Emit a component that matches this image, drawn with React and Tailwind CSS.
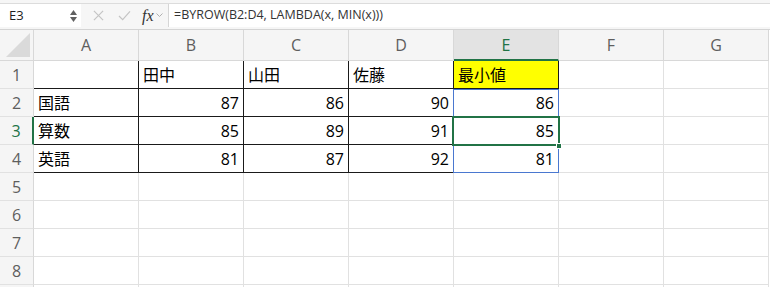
import React from "react";

const cols = ["A", "B", "C", "D", "E", "F", "G"];

const data = [
  ["", "田中", "山田", "佐藤", "最小値"],
  ["国語", 87, 86, 90, 86],
  ["算数", 85, 89, 91, 85],
  ["英語", 81, 87, 92, 81],
];

const font = { fontFamily: '"Open Sans", "Noto Sans CJK JP", sans-serif' };

function Cell({ r, c }) {
  const inTable = r >= 1 && r <= 4 && c <= 4;
  const v = inTable ? data[r - 1][c] : "";
  const num = typeof v === "number";
  const yellow = r === 1 && c === 4;
  return (
    <div
      className={`h-[28px] border-r border-b flex items-center px-[4px] text-[16px] text-black leading-none ${
        inTable ? "border-[#1a1a1a]" : "border-[#e1e1e1]"
      } ${num ? "justify-end" : "justify-start"} ${yellow ? "bg-[#ffff00]" : "bg-white"}`}
    >
      {v}
    </div>
  );
}

export default function App() {
  return (
    <div className="w-[770px] h-[287px] overflow-hidden bg-white" style={font}>
      {/* formula bar */}
      <div className="h-[30px] pt-[3px] bg-[#f6f6f6] border-b border-[#d4d4d4]">
        <div className="h-[24px] border-t border-[#dcdcdc] flex items-stretch">
          <div className="w-[81px] bg-white flex items-center justify-between pl-[9px] pr-[4px] text-[13px] text-[#1f1f1f]">
            <span>E3</span>
            <span className="flex flex-col items-center gap-[2px]">
              <svg width="7" height="5" viewBox="0 0 7 5"><path d="M3.5 0L7 5H0z" fill="#606060" /></svg>
              <svg width="7" height="5" viewBox="0 0 7 5"><path d="M0 0h7L3.5 5z" fill="#606060" /></svg>
            </span>
          </div>
          <div className="w-[87px] flex items-center pl-[12px] gap-[14px]">
            <svg width="11" height="11" viewBox="0 0 12 12"><path d="M1 1l10 10M11 1L1 11" stroke="#c4c4c4" strokeWidth="1.3" /></svg>
            <svg width="13" height="11" viewBox="0 0 14 12"><path d="M1 6.5l4 4L13 1.5" stroke="#c4c4c4" strokeWidth="1.3" fill="none" /></svg>
            <span className="flex items-center gap-[2px] -ml-[3px]">
              <span className="italic text-[16px] text-[#333]" style={{ fontFamily: '"Liberation Serif", serif' }}>fx</span>
              <svg width="7" height="5" viewBox="0 0 7 5"><path d="M0.5 0.5l3 3 3-3" stroke="#b0b0b0" fill="none" /></svg>
            </span>
          </div>
          <div className="flex-1 bg-white border-l border-[#d6d6d6] flex items-center pl-[5px] text-[12.5px] text-[#333]">
            =BYROW(B2:D4, LAMBDA(x, MIN(x)))
          </div>
        </div>
      </div>

      {/* sheet */}
      <div className="relative grid grid-cols-[34px_repeat(7,105px)]">
        {/* header row */}
        <div className="h-[31px] bg-[#f5f5f5] border-r border-b border-[#d8d8d8] relative">
          <svg className="absolute right-[3px] bottom-[3px]" width="24" height="24" viewBox="0 0 24 24">
            <path d="M24 0V24H0z" fill="#dadada" />
          </svg>
        </div>
        {cols.map((c) => (
          <div
            key={c}
            className={`h-[31px] flex items-center justify-center text-[16px] border-r ${
              c === "E"
                ? "bg-[#e3e3e3] text-[#217346] border-b-2 border-b-[#217346] border-r-[#d8d8d8]"
                : "bg-[#f5f5f5] text-[#5e5e5e] border-b border-[#d8d8d8]"
            }`}
          >
            {c}
          </div>
        ))}

        {[1, 2, 3, 4, 5, 6, 7, 8, 9].map((r) => (
          <React.Fragment key={r}>
            <div
              className={`h-[28px] bg-[#f5f5f5] flex items-center justify-center text-[16px] border-b border-[#e1e1e1] ${
                r === 3 ? "text-[#217346] border-r-2 border-r-[#217346]" : "text-[#5e5e5e] border-r border-r-[#d8d8d8]"
              }`}
            >
              {r < 9 ? r : ""}
            </div>
            {cols.map((c, i) => (
              <Cell key={c} r={r} c={i} />
            ))}
          </React.Fragment>
        ))}

        {/* selected range E2:E4 */}
        <div className="absolute left-[453px] top-[59px] w-[106px] h-[84px] border border-[#4a78d0] pointer-events-none" />
        {/* active cell E3 */}
        <div className="absolute left-[452px] top-[86px] w-[108px] h-[30px] border-2 border-[#217346] pointer-events-none" />
        <div className="absolute left-[556px] top-[113px] w-[6px] h-[6px] bg-[#217346] border border-white pointer-events-none" />
      </div>
    </div>
  );
}
